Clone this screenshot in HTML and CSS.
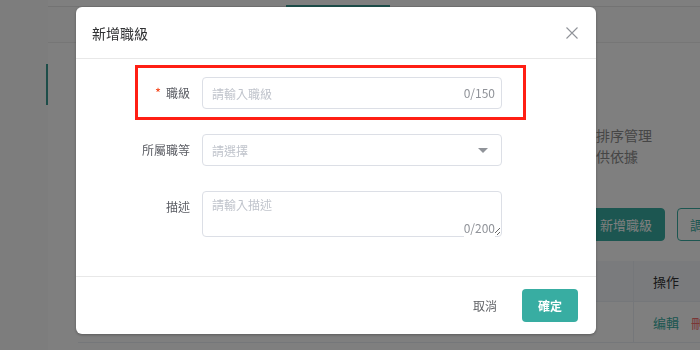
FILE: index.html
```html
<!DOCTYPE html>
<html lang="zh-Hant">
<head>
  <meta charset="UTF-8" />
  <meta name="viewport" content="width=device-width, initial-scale=1.0" />
  <title>職級管理</title>
  <link rel="stylesheet" href="styles.css">
</head>
<body>

<div class="pagina">
  <aside class="menu-lateral">
    <div class="menu-grupo">
      <div class="menu-item activo"></div>
    </div>
  </aside>

  <div class="zona-principal">
    <nav class="barra-superior">
      <span class="pestana"></span>
      <span class="pestana activa"></span>
    </nav>
    <div class="migas"></div>

    <main class="contenido">
      <div class="descripcion">
        <p>用於排序管理</p>
        <p>可提供依據</p>
      </div>

      <div class="acciones-tabla">
        <button class="btn-primario">新增職級</button>
        <button class="btn-borde">調整排序</button>
      </div>

      <table class="tabla">
        <thead>
          <tr><th class="col-nombre">職級</th><th class="col-ops">操作</th></tr>
        </thead>
        <tbody>
          <tr>
            <td class="col-nombre">專員</td>
            <td class="col-ops"><span class="link-editar">编輯</span><span class="link-borrar">刪除</span></td>
          </tr>
        </tbody>
      </table>
    </main>
  </div>
</div>

<div class="mascara"></div>

<div class="dialogo">
  <header class="dialogo-cabecera">
    <span class="dialogo-titulo">新增職級</span>
    <button class="btn-cerrar" aria-label="關閉">
      <svg width="12" height="12" viewBox="0 0 12 12"><path d="M0.5 0.5L11.5 11.5M11.5 0.5L0.5 11.5" stroke="#909399" stroke-width="1.1" fill="none"/></svg>
    </button>
  </header>

  <form class="dialogo-cuerpo">
    <div class="campo resaltado">
      <label class="etiqueta"><span class="requerido">*</span>職級</label>
      <div class="entrada">
        <input type="text" placeholder="請輸入職級">
        <span class="contador">0/150</span>
      </div>
    </div>

    <div class="campo">
      <label class="etiqueta">所屬職等</label>
      <div class="entrada">
        <input type="text" placeholder="請選擇" readonly>
        <span class="flecha"></span>
      </div>
    </div>

    <div class="campo">
      <label class="etiqueta">描述</label>
      <div class="entrada">
        <textarea placeholder="請輸入描述"></textarea>
        <span class="contador contador-area">0/200</span>
      </div>
    </div>
  </form>

  <footer class="dialogo-pie">
    <button class="btn-cancelar">取消</button>
    <button class="btn-confirmar">確定</button>
  </footer>
</div>

</body>
</html>
```

FILE: styles.css
```css
body {
  margin: 0;
  font-family: "Noto Sans CJK TC", "Noto Sans", sans-serif;
  background-color: #fff;
  color: #606266;
  overflow: hidden;
}

button {
  font-family: inherit;
}

.pagina {
  display: flex;
  height: 350px;
}

.menu-lateral {
  width: 48px;
  background-color: #fbfbfb;
  box-sizing: border-box;
}

.menu-grupo {
  padding-top: 64px;
  height: 42px;
}

.menu-item.activo {
  height: 41px;
  width: 2px;
  background-color: #3a9b93;
  margin-left: 46px;
}

.zona-principal {
  flex: 1;
  display: flex;
  flex-direction: column;
}

.barra-superior {
  height: 6px;
  display: flex;
  border-bottom: 1px solid #e6e6e6;
  background-color: #fff;
}

.pestana {
  width: 238px;
}

.pestana.activa {
  width: 104px;
  border-bottom: 2px solid #3a9b93;
  box-sizing: border-box;
  height: 7px;
}

.migas {
  height: 35px;
  border-bottom: 1px solid #ececec;
  background-color: #fdfdfd;
}

.contenido {
  flex: 1;
  background-color: #fff;
  padding-top: 82px;
}

.descripcion {
  padding-left: 520px;
  font-size: 14px;
  color: #8c8c8c;
  line-height: 21px;
}

.descripcion p {
  margin: 0;
  white-space: nowrap;
}

.acciones-tabla {
  display: flex;
  gap: 12px;
  padding-left: 539px;
  margin-top: 41px;
}

.btn-primario,
.btn-borde {
  height: 33px;
  padding: 0 12px;
  font-size: 13px;
  border-radius: 4px;
  white-space: nowrap;
}

.btn-primario {
  background-color: #38ada2;
  border: 1px solid #38ada2;
  color: #fff;
}

.btn-borde {
  background-color: #fff;
  border: 1px solid #38ada2;
  color: #38ada2;
}

.tabla {
  margin-top: 20px;
  margin-left: 30px;
  border-collapse: collapse;
  font-size: 13px;
  white-space: nowrap;
}

.tabla th,
.tabla td {
  height: 40px;
  padding: 0 19px;
  text-align: left;
  border-bottom: 1px solid #ebeef5;
}

.tabla th {
  background-color: #f5f7fa;
  color: #303133;
  font-weight: normal;
}

.tabla .col-nombre {
  width: 517px;
  border-right: 1px solid #ebeef5;
}

.link-editar {
  color: #38ada2;
  margin-right: 12px;
}

.link-borrar {
  color: #f56c6c;
}

/* capa y diálogo */
.mascara {
  position: fixed;
  inset: 0;
  background-color: rgba(0, 0, 0, 0.5);
}

.dialogo {
  position: fixed;
  left: 76px;
  top: 7px;
  width: 520px;
  background-color: #fff;
  border-radius: 6px;
  box-shadow: 0 1px 3px rgba(0, 0, 0, 0.3);
}

.dialogo-cabecera {
  height: 51px;
  border-bottom: 1px solid #e8e8e8;
  display: flex;
  align-items: center;
  justify-content: space-between;
  padding: 0 18px 0 16px;
}

.dialogo-titulo {
  font-size: 14px;
  color: #303133;
}

.btn-cerrar {
  background: none;
  border: none;
  padding: 0;
  display: flex;
  cursor: pointer;
}

.dialogo-cuerpo {
  padding: 6px 0 26px 59px;
}

.campo {
  display: flex;
  align-items: flex-start;
  width: 367px;
  border: 3px solid transparent;
  padding: 9px 18px 8px 0;
  margin-bottom: 2px;
}

.campo.resaltado {
  border-color: #ff1f14;
}

.etiqueta {
  width: 64px;
  box-sizing: border-box;
  padding-right: 12px;
  text-align: right;
  font-size: 12px;
  line-height: 32px;
  color: #5a5c63;
  flex-shrink: 0;
}

.requerido {
  color: #f5461c;
  font-size: 13px;
  margin-right: 5px;
}

.entrada {
  position: relative;
  width: 300px;
}

.entrada input,
.entrada textarea {
  width: 100%;
  box-sizing: border-box;
  border: 1px solid #dcdfe6;
  border-radius: 4px;
  font-family: inherit;
  font-size: 12px;
  color: #606266;
  outline: none;
}

.entrada input {
  height: 32px;
  padding: 0 9px;
}

.entrada textarea {
  display: block;
  height: 46px;
  padding: 4px 9px;
  resize: vertical;
}

::placeholder {
  color: #c0c4cc;
}

.contador {
  position: absolute;
  right: 7px;
  top: 0;
  line-height: 32px;
  font-size: 12px;
  color: #909399;
}

.contador-area {
  top: auto;
  bottom: 0;
  line-height: 18px;
  background-color: #fff;
}

.flecha {
  position: absolute;
  right: 14px;
  top: 14px;
  border-left: 5px solid transparent;
  border-right: 5px solid transparent;
  border-top: 5px solid #909399;
}

.dialogo-pie {
  border-top: 1px solid #e8e8e8;
  display: flex;
  justify-content: flex-end;
  gap: 9px;
  padding: 12px 18px 12px 0;
}

.btn-cancelar,
.btn-confirmar {
  height: 33px;
  padding: 0 16px;
  font-size: 12px;
  border-radius: 4px;
  cursor: pointer;
}

.btn-cancelar {
  background: none;
  border: none;
  color: #606266;
}

.btn-confirmar {
  background-color: #38ada2;
  border: none;
  color: #fff;
  font-weight: bold;
}
```
